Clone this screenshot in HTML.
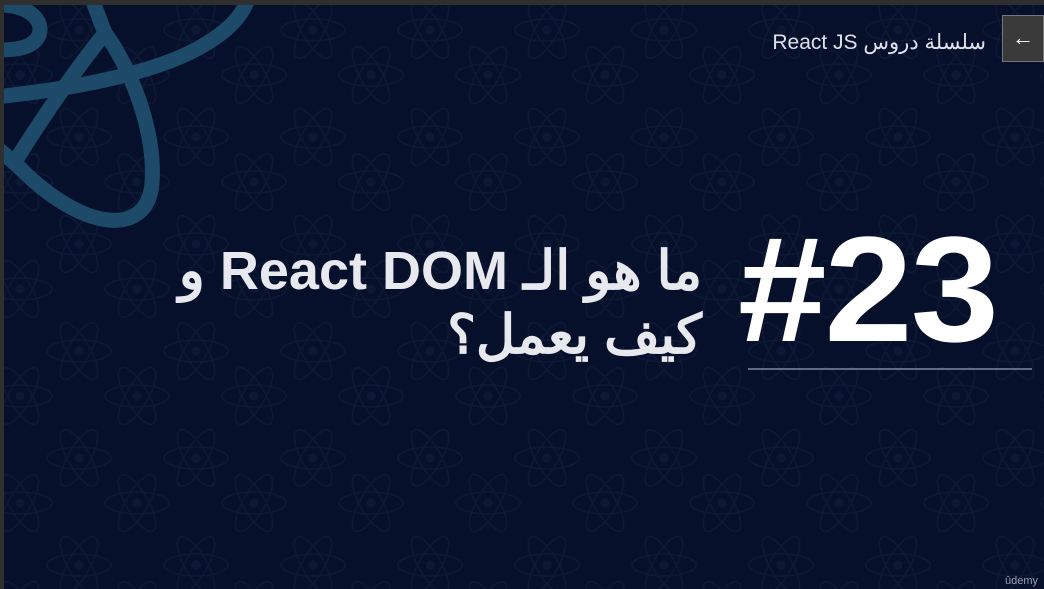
<!DOCTYPE html>
<html><head><meta charset="utf-8"><style>
html,body{margin:0;padding:0;}
body{width:1044px;height:589px;overflow:hidden;background:#2f2f2f;position:relative;font-family:"Liberation Sans","Noto Sans CJK SC",sans-serif;}
#main{position:absolute;left:4px;top:5px;width:1040px;height:584px;background:#06102a;overflow:hidden;}
svg{position:absolute;left:0;top:0;}
.t{position:absolute;color:#e8e9ef;white-space:nowrap;}
</style></head><body>
<div id="main">
<svg width="1040" height="584" viewBox="0 0 1040 584">
<defs>
<g id="a" fill="none" stroke="#0d1934" stroke-width="1.6">
<ellipse cx="0" cy="0" rx="32" ry="11"/>
<ellipse cx="0" cy="0" rx="32" ry="11" transform="rotate(60)"/>
<ellipse cx="0" cy="0" rx="32" ry="11" transform="rotate(120)"/>
<circle cx="0" cy="0" r="4.5" fill="#0d1934" stroke="none"/>
</g>
<pattern id="p" x="-4" y="-5" width="117" height="107" patternUnits="userSpaceOnUse">
<use href="#a" x="79" y="30"/>
<use href="#a" x="20" y="75"/>
<use href="#a" x="137" y="75"/>
<use href="#a" x="79" y="137"/>
<use href="#a" x="-38" y="30"/>
<use href="#a" x="20" y="-32"/>
<use href="#a" x="137" y="-32"/>
</pattern>
</defs>
<rect width="1040" height="584" fill="url(#p)"/>
<g fill="none" stroke="#1e4a6a" stroke-width="15" stroke-linejoin="round">
<path d="M101,28 C125,60 152,125 148,178 C144,232 80,228 15,162 L-10,140"/>
<path d="M101,28 C75,60 40,110 12,155"/>
<path d="M101,28 C96,15 90,0 85,-15"/>
<path d="M-10,92 C60,85 150,70 200,40 C225,25 240,10 245,-10"/>
<path d="M-5,0 C25,0 40,15 35,30 C30,42 15,45 -5,45"/>
</g>
<line x1="744" y1="364" x2="1028" y2="364" stroke="#9aa0b2" stroke-width="1.2"/>
</svg>
<div class="t" style="right:58px;top:25px;font-size:21px;color:#dfe1e8;direction:rtl;">سلسلة دروس React JS</div>
<div class="t" style="left:734px;top:209px;font-size:150px;font-weight:bold;color:#fff;letter-spacing:-2px;line-height:150px;transform:scaleX(1.06);transform-origin:left top;">#23</div>
<div class="t" style="right:342px;top:234px;font-size:54px;font-weight:bold;text-align:right;line-height:64px;direction:rtl;">ما هو الـ React DOM و<br>كيف يعمل؟</div>
<div class="t" style="right:6px;bottom:2px;font-size:11px;color:#9aa0ae;">ûdemy</div>
</div>
<div style="position:absolute;left:1002px;top:15px;width:42px;height:47px;background:#3a3a3a;border:1px solid #777;box-sizing:border-box;color:#fff;font-size:22px;line-height:44px;text-align:center;">←</div>
</body></html>
